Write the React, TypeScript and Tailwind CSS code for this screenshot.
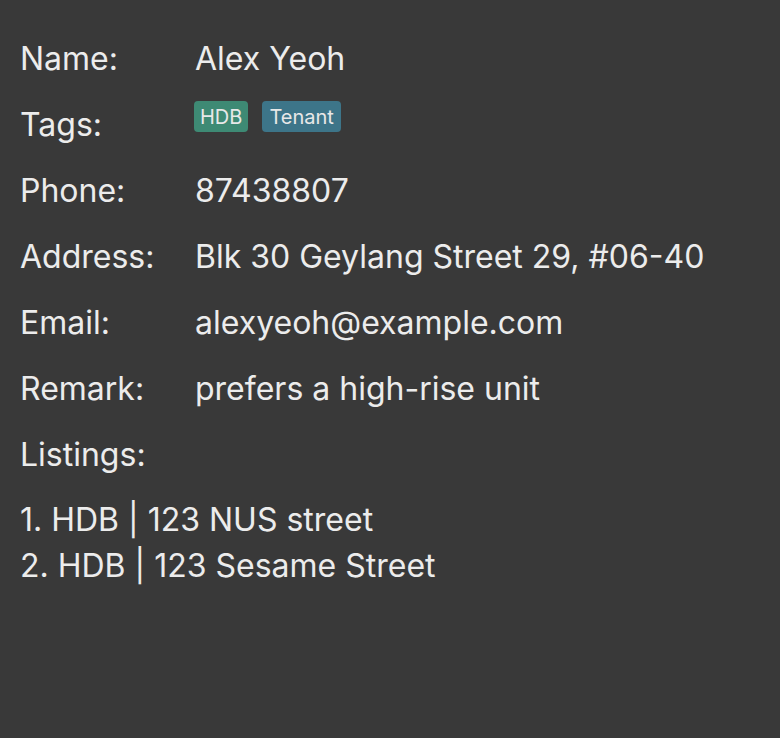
const rows: { label: string; value?: string }[] = [
  { label: 'Name:', value: 'Alex Yeoh' },
  { label: 'Tags:' },
  { label: 'Phone:', value: '87438807' },
  { label: 'Address:', value: 'Blk 30 Geylang Street 29, #06-40' },
  { label: 'Email:', value: 'alexyeoh@example.com' },
  { label: 'Remark:', value: 'prefers a high-rise unit' },
  { label: 'Listings:' },
];

const listings = ['HDB | 123 NUS street', 'HDB | 123 Sesame Street'];

export default function App() {
  return (
    <div
      className="w-[780px] h-[738px] bg-[#393939] text-[#ececec] px-5 pt-[26px]"
      style={{ fontFamily: 'Inter, "Open Sans", sans-serif' }}
    >
      <div className="flex flex-col">
        {rows.map((row) => (
          <div key={row.label} className="flex items-center h-[66px] text-[32px]">
            <span className="w-[175px] shrink-0">{row.label}</span>
            {row.label === 'Tags:' ? (
              <div className="flex gap-[14px] -mt-[17px] -ml-[1px]">
                <span className="bg-[#3e8a74] rounded-[4px] px-[6px] h-[31px] flex items-center text-[20px] text-[#e8e8e8]">
                  HDB
                </span>
                <span className="bg-[#3d7589] rounded-[4px] px-[7px] h-[31px] flex items-center text-[20px] text-[#e8e8e8]">
                  Tenant
                </span>
              </div>
            ) : (
              <span>{row.value}</span>
            )}
          </div>
        ))}
      </div>
      <div className="mt-[9px] text-[32px] leading-[46px]">
        {listings.map((l, i) => (
          <div key={l}>
            {i + 1}. {l}
          </div>
        ))}
      </div>
    </div>
  );
}
